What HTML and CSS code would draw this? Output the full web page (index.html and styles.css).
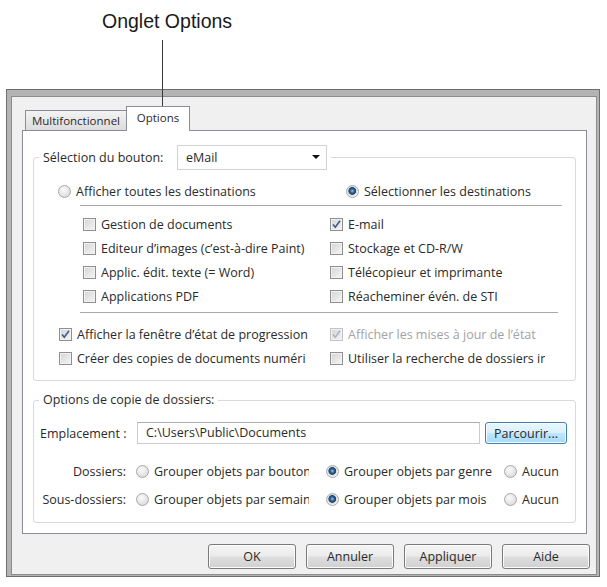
FILE: index.html
```html
<!DOCTYPE html>
<html lang="fr">
<head>
    <meta charset="UTF-8">
    <meta name="viewport" content="width=device-width, initial-scale=1.0">
    <title>Onglet Options</title>
    <link rel="stylesheet" href="styles.css">
</head>
<body>
<div class="page">
    <div class="caption">Onglet Options</div>
    <div class="pointer"></div>

    <div class="frame">
        <div class="window">
            <div class="tabs">
                <div class="tab">Multifonctionnel</div>
                <div class="tab active">Options</div>
            </div>

            <div class="panel">
                <fieldset class="group group-main">
                    <legend>
                        <span class="legend-label">Sélection du bouton:</span>
                        <span class="combo">eMail<span class="arrow"></span></span>
                    </legend>

                    <div class="dest-choice">
                        <div class="option"><span class="radio"></span><span>Afficher toutes les destinations</span></div>
                        <div class="option"><span class="radio on"></span><span>Sélectionner les destinations</span></div>
                    </div>

                    <div class="separator"></div>

                    <div class="dest-list">
                        <div class="option"><span class="check"></span><span>Gestion de documents</span></div>
                        <div class="option"><span class="check on"><svg viewBox="0 0 11 11"><path d="M2 5.5 L4.3 8.3 L9 1.8"/></svg></span><span>E-mail</span></div>
                        <div class="option"><span class="check"></span><span>Editeur d’images (c’est-à-dire Paint)</span></div>
                        <div class="option"><span class="check"></span><span>Stockage et CD-R/W</span></div>
                        <div class="option"><span class="check"></span><span>Applic. édit. texte (= Word)</span></div>
                        <div class="option"><span class="check"></span><span>Télécopieur et imprimante</span></div>
                        <div class="option"><span class="check"></span><span>Applications PDF</span></div>
                        <div class="option"><span class="check"></span><span>Réacheminer évén. de STI</span></div>
                    </div>

                    <div class="separator short"></div>

                    <div class="extra-list">
                        <div class="option"><span class="check on"><svg viewBox="0 0 11 11"><path d="M2 5.5 L4.3 8.3 L9 1.8"/></svg></span><span>Afficher la fenêtre d’état de progression</span></div>
                        <div class="option disabled"><span class="check on"><svg viewBox="0 0 11 11"><path d="M2 5.5 L4.3 8.3 L9 1.8"/></svg></span><span>Afficher les mises à jour de l’état</span></div>
                        <div class="option"><span class="check"></span><span class="clip clip-create">Créer des copies de documents numérisés</span></div>
                        <div class="option"><span class="check"></span><span class="clip clip-search">Utiliser la recherche de dossiers intelligente</span></div>
                    </div>
                </fieldset>

                <fieldset class="group group-copy">
                    <legend>Options de copie de dossiers:</legend>

                    <div class="copy-row">
                        <span class="copy-label">Emplacement :</span>
                        <span class="textbox">C:\Users\Public\Documents</span>
                        <button class="btn btn-browse">Parcourir...</button>
                    </div>

                    <div class="folder-grid">
                        <span class="folder-label">Dossiers:</span>
                        <div class="option"><span class="radio"></span><span class="clip clip-group">Grouper objets par bouton</span></div>
                        <div class="option"><span class="radio on"></span><span>Grouper objets par genre</span></div>
                        <div class="option"><span class="radio"></span><span>Aucun</span></div>

                        <span class="folder-label">Sous-dossiers:</span>
                        <div class="option"><span class="radio"></span><span class="clip clip-group">Grouper objets par semaine</span></div>
                        <div class="option"><span class="radio on"></span><span>Grouper objets par mois</span></div>
                        <div class="option"><span class="radio"></span><span>Aucun</span></div>
                    </div>
                </fieldset>
            </div>

            <div class="buttons">
                <button class="btn">OK</button>
                <button class="btn">Annuler</button>
                <button class="btn">Appliquer</button>
                <button class="btn">Aide</button>
            </div>
        </div>
    </div>
</div>
</body>
</html>
```

FILE: styles.css
```css
body {
    margin: 0;
    font-family: "Open Sans", "Noto Sans", sans-serif;
    font-size: 12.5px;
    color: #2a2a2a;
    background: #fff;
}
.page {
    position: relative;
    width: 607px;
    height: 587px;
    overflow: hidden;
}
.caption {
    padding: 10px 0 0 102px;
    font-family: "Liberation Sans", Arial, sans-serif;
    font-size: 19.5px;
    line-height: 22px;
    color: #1a1a1a;
}
.pointer {
    position: absolute;
    left: 162px;
    top: 40px;
    width: 1px;
    height: 67px;
    background: #3a3a3a;
}

/* window chrome */
.frame {
    width: 586px;
    margin: 57px 0 0 6px;
    border: 1px solid #6e6e6e;
    background: #b4b4b4;
    padding: 6px 2px 1px 4px;
}
.window {
    border: 1px solid #8c8c8c;
    background: #f0f0f0;
    padding: 9px 9px 5px 10px;
}

/* tabs */
.tabs {
    display: flex;
    align-items: flex-end;
    height: 24px;
    padding-left: 3px;
}
.tab {
    width: 100px;
    height: 19px;
    line-height: 19px;
    text-align: center;
    border: 1px solid #898c95;
    border-bottom: none;
    background: linear-gradient(#f3f3f3, #dcdcdc);
    font-size: 11.5px;
}
.tab.active {
    position: relative;
    z-index: 1;
    width: 62px;
    height: 24px;
    line-height: 22px;
    margin: 0 0 -1px -1px;
    background: #fff;
}
.panel {
    border: 1px solid #898c95;
    background: #fff;
    padding: 14px 10px 10px 10px;
}

/* group boxes */
.group {
    margin: 0;
    padding: 0;
    min-width: 0;
    border: 1px solid #d6dade;
    border-radius: 3px;
}
.group legend {
    margin-left: 5px;
    padding: 0 4px;
    line-height: 16px;
}
.group-main legend {
    display: flex;
    align-items: center;
    height: 25px;
}
.legend-label {
    width: 134px;
}
.combo {
    position: relative;
    width: 140px;
    height: 23px;
    line-height: 23px;
    padding-left: 8px;
    border: 1px solid #d2d2d2;
    background: #fff;
}
.arrow {
    position: absolute;
    right: 6px;
    top: 9px;
    border-left: 4px solid transparent;
    border-right: 4px solid transparent;
    border-top: 4px solid #111;
}
.group-copy {
    margin-top: 11px;
}

/* options */
.option {
    display: flex;
    align-items: center;
    min-width: 0;
    white-space: nowrap;
}
.option.disabled {
    color: #a3a3a3;
}
.clip {
    overflow: hidden;
}
.clip-create { max-width: 229px; }
.clip-search { max-width: 197px; }
.clip-group { max-width: 155px; }

.radio {
    flex: none;
    width: 11px;
    height: 11px;
    margin-right: 5px;
    border: 1px solid #a9a9a9;
    border-radius: 50%;
    background: radial-gradient(circle at 40% 35%, #fbfbfb, #d2d2d2);
}
.radio.on {
    background: radial-gradient(circle at 48% 45%, #9cc8ea 0, #2d6194 2px, #1d4468 3.5px, #dcdcdc 4.2px, #f4f4f4 6px);
}
.check {
    flex: none;
    display: flex;
    width: 11px;
    height: 11px;
    margin-right: 5px;
    border: 1px solid #8f8f8f;
    background: linear-gradient(135deg, #d3d3d3, #f6f6f6);
    box-shadow: inset 0 0 0 1px #f2f2f2;
}
.check svg {
    width: 11px;
    height: 11px;
}
.check path {
    fill: none;
    stroke: #3f5a8c;
    stroke-width: 1.6;
}
.disabled .check {
    border-color: #c2c2c2;
}
.disabled .check path {
    stroke: #a9b4c8;
}

.dest-choice {
    display: grid;
    grid-template-columns: 288px auto;
    padding: 11px 0 0 24px;
}
.dest-choice .option {
    height: 20px;
}
.separator {
    height: 1px;
    width: 482px;
    margin: 4px 0 0 46px;
    background: #a8a8a8;
}
.separator.short {
    width: 478px;
}
.dest-list {
    display: grid;
    grid-template-columns: 247px auto;
    grid-auto-rows: 24px;
    padding: 6px 0 0 49px;
}
.extra-list {
    display: grid;
    grid-template-columns: 271px auto;
    grid-auto-rows: 24px;
    padding: 9px 0 10px 25px;
}

/* folder copy options */
.copy-row {
    display: flex;
    align-items: center;
    padding: 14px 0 0 6px;
}
.copy-label {
    width: 97px;
}
.textbox {
    width: 333px;
    height: 20px;
    line-height: 20px;
    padding-left: 8px;
    border: 1px solid #c9cbd0;
    border-top-color: #abadb3;
    background: #fff;
}
.folder-grid {
    display: grid;
    grid-template-columns: 96px 190px 178px auto;
    grid-auto-rows: 20px;
    row-gap: 8px;
    padding: 17px 0 13px 6px;
}
.folder-label {
    align-self: center;
    text-align: right;
    padding-right: 10px;
}

/* buttons */
.btn {
    box-sizing: border-box;
    width: 88px;
    height: 25px;
    padding: 0;
    border: 1px solid #7a7a7a;
    border-radius: 3px;
    background: linear-gradient(#f4f4f4 0, #ececec 48%, #dedede 52%, #d0d0d0 100%);
    box-shadow: inset 0 0 0 1px #fbfbfb;
    font: inherit;
    color: #2a2a2a;
}
.btn-browse {
    width: 82px;
    height: 22px;
    margin-left: 5px;
    border-color: #3c7fb1;
    background: linear-gradient(#eaf6fd 0, #d9f0fc 48%, #bee6fd 52%, #a7d9f5 100%);
}
.buttons {
    display: flex;
    justify-content: flex-end;
    gap: 10px;
    margin: 10px -3px 0 0;
}
```
